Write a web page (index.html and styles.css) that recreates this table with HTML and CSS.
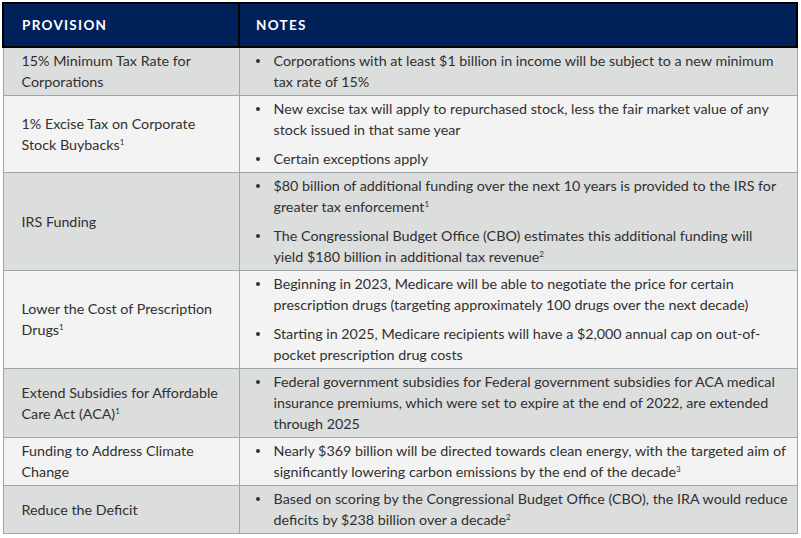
FILE: index.html
```html
<!DOCTYPE html>
<html lang="en">
<head>
<meta charset="utf-8">
<title>Inflation Reduction Act provisions</title>
<link rel="stylesheet" href="styles.css">
</head>
<body>
<div class="wrap">
<table class="prov">
  <colgroup><col class="c1"><col class="c2"></colgroup>
  <thead>
    <tr><th>PROVISION</th><th>NOTES</th></tr>
  </thead>
  <tbody>
    <tr class="dark">
      <td class="name">15% Minimum Tax Rate for Corporations</td>
      <td><ul><li><span>Corporations with at least $1 billion in income will be subject to a new minimum tax rate of 15%</span></li></ul></td>
    </tr>
    <tr class="light">
      <td class="name">1% Excise Tax on Corporate Stock Buybacks<sup>1</sup></td>
      <td><ul><li><span>New excise tax will apply to repurchased stock, less the fair market value of any stock issued in that same year</span></li><li><span>Certain exceptions apply</span></li></ul></td>
    </tr>
    <tr class="dark">
      <td class="name">IRS Funding</td>
      <td><ul><li><span>$80 billion of additional funding over the next 10 years is provided to the IRS for greater tax enforcement<sup>1</sup></span></li><li><span>The Congressional Budget Office (CBO) estimates this additional funding will yield&nbsp;$180 billion in additional tax revenue<sup>2</sup></span></li></ul></td>
    </tr>
    <tr class="light">
      <td class="name">Lower the Cost of Prescription Drugs<sup>1</sup></td>
      <td><ul><li><span>Beginning in 2023, Medicare will be able to negotiate the price for certain prescription drugs (targeting approximately 100 drugs over the next decade)</span></li><li><span>Starting in 2025, Medicare recipients will have a $2,000 annual cap on out-of-pocket prescription drug costs</span></li></ul></td>
    </tr>
    <tr class="dark">
      <td class="name">Extend Subsidies for Affordable Care Act (ACA)<sup>1</sup></td>
      <td><ul><li><span>Federal government subsidies for Federal government subsidies for ACA medical insurance premiums, which were set to expire at the end of 2022, are extended through 2025</span></li></ul></td>
    </tr>
    <tr class="light">
      <td class="name">Funding to Address Climate Change</td>
      <td><ul><li><span>Nearly $369 billion will be directed towards clean energy, with the targeted aim of significantly lowering carbon emissions by the end of the decade<sup>3</sup></span></li></ul></td>
    </tr>
    <tr class="dark">
      <td class="name">Reduce the Deficit</td>
      <td><ul><li><span>Based on scoring by the Congressional Budget Office (CBO), the IRA would reduce deficits by $238 billion over a decade<sup>2</sup></span></li></ul></td>
    </tr>
  </tbody>
</table>
</div>
</body>
</html>
```
FILE: styles.css
```css
html, body {
  margin: 0;
  padding: 0;
  background: #ffffff;
}
.wrap {
  padding: 2px 3px 0 2px;
}
.prov {
  width: 796px;
  border-collapse: collapse;
  font-family: Lato, "Liberation Sans", sans-serif;
  font-size: 14.3px;
  line-height: 21px;
  color: #303030;
}
.c1 { width: 236px; }
.prov th {
  background: #00215a;
  color: #ffffff;
  border: 2px solid #000000;
  text-align: left;
  font-weight: 700;
  font-size: 13.5px;
  letter-spacing: 1.3px;
  height: 42px;
  padding: 0 0 0 18px;
}
.prov th + th { padding-left: 16px; }
.prov td {
  border: 1px solid #9fa7ae;
  padding: 2px 8px 3px 16px;
  vertical-align: middle;
}
.prov td.name { padding-left: 18px; }
.dark td { background: #dcdddd; }
.light td { background: #f3f3f3; }
.prov ul {
  margin: 0;
  padding: 0;
  list-style: none;
  display: flex;
  flex-direction: column;
  gap: 8px;
}
.prov li {
  display: flex;
}
.prov li::before {
  content: "";
  flex: none;
  width: 4px;
  height: 4px;
  border-radius: 50%;
  background: #303030;
  margin: 9px 14px 0 0;
}
.prov sup {
  font-size: 8px;
  line-height: 0;
  vertical-align: 5px;
}
```
